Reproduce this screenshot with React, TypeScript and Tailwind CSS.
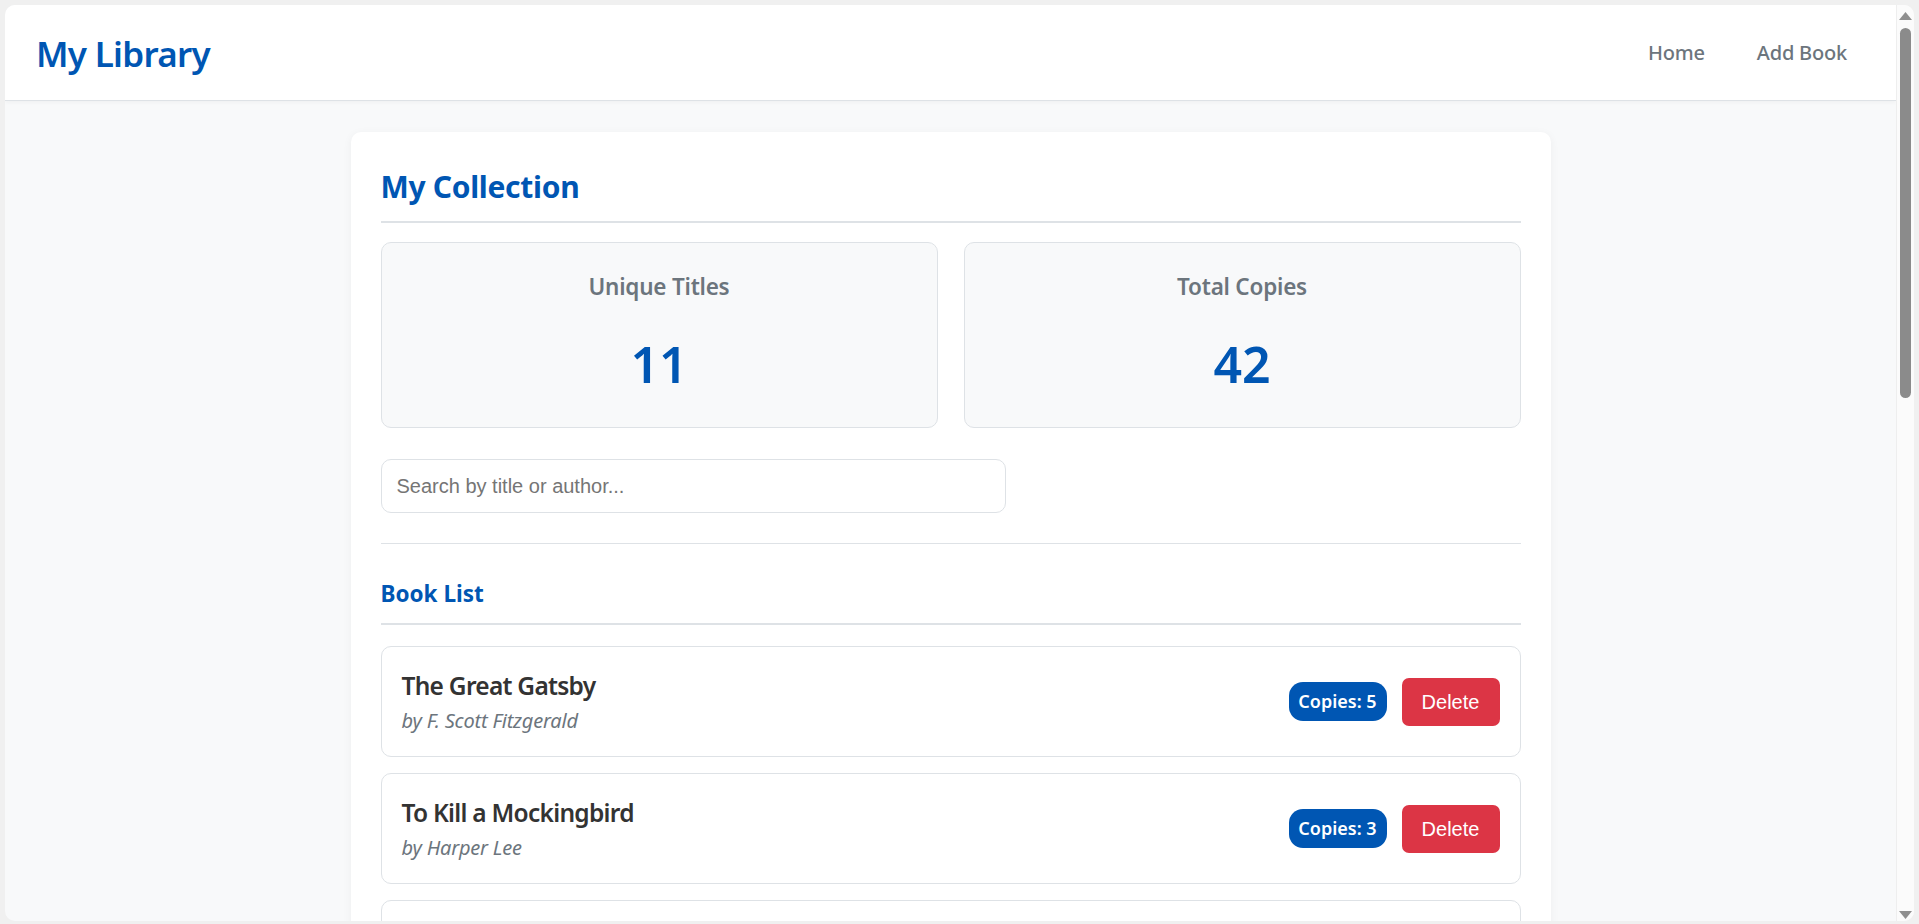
import type { ReactNode } from "react";

type Book = {
  title: string;
  author: string;
  copies: number;
};

const books: Book[] = [
  { title: "The Great Gatsby", author: "F. Scott Fitzgerald", copies: 5 },
  { title: "To Kill a Mockingbird", author: "Harper Lee", copies: 3 },
  { title: "1984", author: "George Orwell", copies: 4 },
];

function StatCard({ label, value }: { label: string; value: ReactNode }) {
  return (
    <div className="flex h-[186px] flex-col items-center rounded-[10px] border border-[#dee2e6] bg-[#f8f9fa] pt-[27px]">
      <h3 className="text-[22.5px] font-semibold leading-[34px] tracking-[-0.01em] text-[#6c757d]">
        {label}
      </h3>
      <div className="mt-[30px] text-[50px] font-semibold leading-[60px] text-[#0056b3]">
        {value}
      </div>
    </div>
  );
}

function BookRow({ book }: { book: Book }) {
  return (
    <li className="flex items-center justify-between rounded-[10px] border border-[#dee2e6] bg-white p-[20px]">
      <div>
        <div className="text-[24.5px] font-semibold leading-[38px] tracking-[-0.03em] text-[#333]">
          {book.title}
        </div>
        <div className="text-[20px] italic leading-[31px] tracking-[-0.01em] text-[#6c757d]">
          by {book.author}
        </div>
      </div>
      <div className="flex items-center gap-[15px]">
        <span className="flex h-[39px] w-[98px] items-center justify-center rounded-[14px] bg-[#0056b3] text-[18px] font-semibold text-white">
          Copies: {book.copies}
        </span>
        <button className="h-[48px] w-[98px] rounded-[7px] bg-[#dc3545] font-['Liberation_Sans',Arial,sans-serif] text-[20px] text-white">
          Delete
        </button>
      </div>
    </li>
  );
}

function Scrollbar() {
  return (
    <div className="flex w-[18px] shrink-0 flex-col items-center border-l border-[#eeeeee] bg-[#fbfbfb]">
      <svg className="mt-[7px]" width="13" height="8" viewBox="0 0 13 8">
        <path d="M6.5 0L13 8H0Z" fill="#8f8f8f" />
      </svg>
      <div className="mt-[8px] h-[370px] w-[11px] rounded-full bg-[#8b8b8b]" />
      <div className="flex-1" />
      <svg className="mb-[2px]" width="13" height="8" viewBox="0 0 13 8">
        <path d="M0 0H13L6.5 8Z" fill="#8f8f8f" />
      </svg>
    </div>
  );
}

export default function App() {
  return (
    <div className="h-[924px] overflow-hidden bg-[#f0f0f0] px-[5px] pt-[5px] pb-[3px] font-['Noto_Sans',sans-serif]">
      <div className="flex h-full overflow-hidden rounded-[10px] bg-[#f8f9fa]">
        <div className="flex min-w-0 flex-1 flex-col">
          <header className="flex h-[96px] shrink-0 items-center justify-between border-b border-[#dee2e6] bg-white pl-[31px] pr-[29px] shadow-[0_2px_4px_rgba(0,0,0,0.03)]">
            <h1 className="mt-[2px] text-[35px] font-semibold leading-none tracking-[-0.02em] text-[#0056b3]">
              My Library
            </h1>
            <nav className="flex gap-[12px]">
              <a className="px-[20px] py-[10px] text-[20px] font-medium tracking-[-0.01em] text-[#6c757d]">
                Home
              </a>
              <a className="px-[20px] py-[10px] text-[20px] font-medium tracking-[-0.01em] text-[#6c757d]">
                Add Book
              </a>
            </nav>
          </header>

          <main className="flex-1 overflow-hidden pt-[31px]">
            <section className="mx-auto w-[1200px] rounded-[10px] bg-white p-[30px] shadow-[0_2px_10px_rgba(0,0,0,0.05)]">
              <h2 className="border-b-2 border-[#dee2e6] pb-[10px] text-[30px] font-bold leading-[49px] tracking-[-0.01em] text-[#0056b3]">
                My Collection
              </h2>

              <div className="mt-[19px] grid grid-cols-2 gap-[26px]">
                <StatCard label="Unique Titles" value="11" />
                <StatCard label="Total Copies" value="42" />
              </div>

              <input
                type="text"
                placeholder="Search by title or author..."
                className="mt-[31px] block h-[54px] w-[625px] rounded-[10px] border border-[#dee2e6] px-[15px] font-['Liberation_Sans',Arial,sans-serif] text-[20px] text-[#333] outline-none placeholder:text-[#757575]"
              />

              <div className="mt-[30px] border-t border-[#dee2e6]">
                <h3 className="mt-[31px] border-b-2 border-[#dee2e6] pb-[10px] text-[22.5px] font-bold leading-[38px] text-[#0056b3]">
                  Book List
                </h3>
                <ul className="mt-[21px] flex flex-col gap-[16px]">
                  {books.map((book) => (
                    <BookRow key={book.title} book={book} />
                  ))}
                </ul>
              </div>
            </section>
          </main>
        </div>
        <Scrollbar />
      </div>
    </div>
  );
}
